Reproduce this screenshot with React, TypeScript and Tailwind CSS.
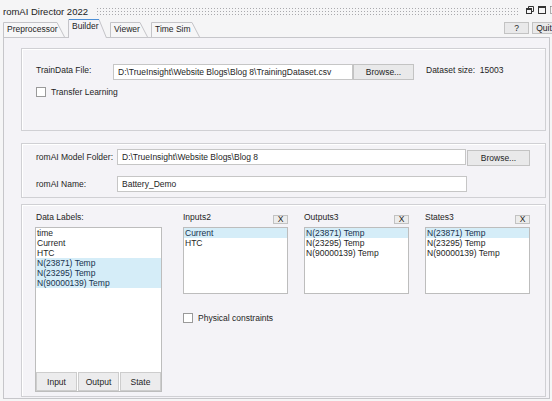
import React from 'react';

const dataLabels = ['time', 'Current', 'HTC', 'N(23871) Temp', 'N(23295) Temp', 'N(90000139) Temp'];
const temps = ['N(23871) Temp', 'N(23295) Temp', 'N(90000139) Temp'];

type TabProps = { label: string; cls: string; w: number; h: number; selected?: boolean };

function Tab({ label, cls, w, h, selected }: TabProps) {
  return (
    <div className={`relative shrink-0 ${cls}`}>
      <svg width={w} height={h} className="absolute left-0 top-0">
        <path
          d={`M0.5 ${h} V0.5 H${w - 8} L${w - 0.5} ${h}`}
          fill={selected ? '#f4f3f7' : '#f6f6f7'}
          stroke="#c4c4c8"
        />
        {selected && <path d={`M1 0.5 H${w - 8}`} stroke="#4b8fd6" />}
      </svg>
      <span className="relative block pl-[4px] pt-[2px] whitespace-nowrap">{label}</span>
    </div>
  );
}

function Checkbox({ label }: { label: string }) {
  return (
    <div className="flex items-center gap-[5px]">
      <span className="w-[10px] h-[10px] border border-[#9a9a9a] bg-white shrink-0" />
      <span>{label}</span>
    </div>
  );
}

function ListRow({ text, active }: { text: string; active?: boolean }) {
  return (
    <div className={active ? 'h-[10px] pl-[1px] bg-[#d5edf8] text-[#17324d]' : 'h-[10px] pl-[1px]'}>{text}</div>
  );
}

function TargetList({ title, items, activeFirst }: { title: string; items: string[]; activeFirst?: boolean }) {
  return (
    <div className="w-[105px] flex flex-col">
      <div className="h-[15px] flex justify-between">
        <span>{title}</span>
        <span className="self-end mb-[3px] w-[15px] h-[9px] border border-[#c2c2c2] bg-[#ececec] flex items-center justify-center text-[8.5px] leading-[9px]">
          X
        </span>
      </div>
      <div className="h-[67px] border border-[#bdbdbd] bg-white">
        {items.map((t, i) => (
          <ListRow key={t} text={t} active={activeFirst && i === 0} />
        ))}
      </div>
    </div>
  );
}

export default function App() {
  return (
    <div className="w-[552px] h-[401px] overflow-hidden bg-[#f5f5f6] text-[8.5px] leading-[10px] text-[#1e1e1e] font-['Liberation_Sans',Arial,sans-serif] flex flex-col">
      {/* title bar */}
      <div className="h-[19px] shrink-0 flex items-start">
        <span className="w-[97px] shrink-0 pl-[3px] pt-[7px] text-[9.5px] leading-[10px] text-[#222] whitespace-nowrap">
          romAI Director 2022
        </span>
        <svg width="422" height="8" className="mt-[8px] shrink-0">
          <defs>
            <pattern id="grip" width="3" height="3" patternUnits="userSpaceOnUse">
              <rect x="0" y="0" width="1" height="1" fill="#a9a9ad" />
            </pattern>
          </defs>
          <rect width="422" height="8" fill="url(#grip)" />
        </svg>
        <svg width="8" height="8" className="ml-[7px] mt-[6px] shrink-0">
          <path d="M2.5 2.5V0.5H7.5V5.5H5.5" fill="none" stroke="#333" />
          <rect x="0.5" y="2.5" width="5" height="5" fill="none" stroke="#333" />
          <path d="M0.5 3.5H5.5" stroke="#333" />
        </svg>
        <svg width="8" height="8" className="ml-[4px] mt-[6px] shrink-0">
          <rect x="0.5" y="0.5" width="7" height="7" fill="none" stroke="#333" />
          <path d="M0.5 1.5H7.5" stroke="#333" />
        </svg>
        <svg width="6" height="8" className="ml-[4px] mt-[6px] shrink-0">
          <path d="M0.5 0.5H6M0.5 0.5V7.5H6" fill="none" stroke="#666" strokeDasharray="1 1" />
        </svg>
      </div>

      {/* tab row */}
      <div className="h-[18px] shrink-0 flex items-end pl-[3px] gap-[3px] -mr-[4px]">
        <Tab label="Preprocessor" cls="w-[62px] h-[15px]" w={62} h={15} />
        <Tab label="Builder" cls="w-[39px] h-[19px] -mb-px z-10" w={39} h={19} selected />
        <Tab label="Viewer" cls="w-[38px] h-[15px]" w={38} h={15} />
        <Tab label="Time Sim" cls="w-[49px] h-[15px]" w={49} h={15} />
        <div className="flex-1" />
        <div className="self-start mt-[3px] flex gap-[3px]">
          <div className="w-[25px] h-[12px] border border-[#c3c3c3] bg-[#e9e9ea] flex items-center justify-center">?</div>
          <div className="w-[24px] h-[12px] border border-[#c3c3c3] bg-[#e9e9ea] flex items-center justify-center">Quit</div>
        </div>
      </div>

      {/* tab page */}
      <div className="ml-[3px] w-[547px] h-[362px] shrink-0 border border-[#c6c6ca] bg-[#f4f3f7] pt-[10px] pl-[17px] flex flex-col">
        {/* training data */}
        <div className="w-[525px] h-[83px] shrink-0 border border-[#d0d0d4] shadow-[inset_1px_1px_0_#ffffff] pl-[14px] pt-[15px]">
          <div className="flex items-start">
            <span className="w-[77px] shrink-0 pt-[1px]">TrainData File:</span>
            <div className="w-[240px] h-[16px] shrink-0 border border-[#c6c6c6] bg-white pl-[4px] flex items-center whitespace-nowrap overflow-hidden">
              D:\TrueInsight\Website Blogs\Blog 8\TrainingDataset.csv
            </div>
            <div className="w-[61px] h-[16px] shrink-0 border border-[#c3c3c3] bg-[#e9e9ea] flex items-center justify-center">
              Browse...
            </div>
            <span className="ml-[12px] pt-[1px] whitespace-pre">Dataset size:  15003</span>
          </div>
          <div className="mt-[7px]">
            <Checkbox label="Transfer Learning" />
          </div>
        </div>

        {/* model folder */}
        <div className="mt-[12px] w-[525px] h-[55px] shrink-0 border border-[#d0d0d4] shadow-[inset_1px_1px_0_#ffffff] pl-[14px] pt-[5px]">
          <div className="flex items-start">
            <span className="w-[81px] shrink-0 pt-[3px]">romAI Model Folder:</span>
            <div className="w-[349px] h-[16px] shrink-0 border border-[#c6c6c6] bg-white pl-[4px] flex items-center">
              D:\TrueInsight\Website Blogs\Blog 8
            </div>
            <div className="ml-[1px] mt-[1px] w-[63px] h-[16px] shrink-0 border border-[#c3c3c3] bg-[#e9e9ea] flex items-center justify-center">
              Browse...
            </div>
          </div>
          <div className="mt-[10px] flex items-start">
            <span className="w-[81px] shrink-0 pt-[3px]">romAI Name:</span>
            <div className="w-[350px] h-[16px] shrink-0 border border-[#c6c6c6] bg-white pl-[4px] flex items-center">
              Battery_Demo
            </div>
          </div>
        </div>

        {/* labels */}
        <div className="mt-[6px] w-[525px] h-[193px] shrink-0 border border-[#d0d0d4] shadow-[inset_1px_1px_0_#ffffff] pl-[13px] pt-[7px] flex">
          <div className="w-[127px] shrink-0 flex flex-col">
            <div className="h-[15px] pl-[1px]">Data Labels:</div>
            <div className="h-[165px] border border-[#bdbdbd] bg-white flex flex-col">
              <div className="flex-1">
                {dataLabels.map((t, i) => (
                  <ListRow key={t} text={t} active={i >= 3} />
                ))}
              </div>
              <div className="flex gap-[1px]">
                <div className="w-[41px] h-[19px] border border-[#cdcdcd] bg-[#ececed] flex items-center justify-center">Input</div>
                <div className="w-[41px] h-[19px] border border-[#cdcdcd] bg-[#ececed] flex items-center justify-center">Output</div>
                <div className="w-[41px] h-[19px] border border-[#cdcdcd] bg-[#ececed] flex items-center justify-center">State</div>
              </div>
            </div>
          </div>

          <div className="ml-[21px] flex flex-col">
            <div className="flex gap-[16px]">
              <TargetList title="Inputs2" items={['Current', 'HTC']} activeFirst />
              <TargetList title="Outputs3" items={temps} activeFirst />
              <TargetList title="States3" items={temps} activeFirst />
            </div>
            <div className="mt-[19px]">
              <Checkbox label="Physical constraints" />
            </div>
          </div>
        </div>
      </div>
    </div>
  );
}
